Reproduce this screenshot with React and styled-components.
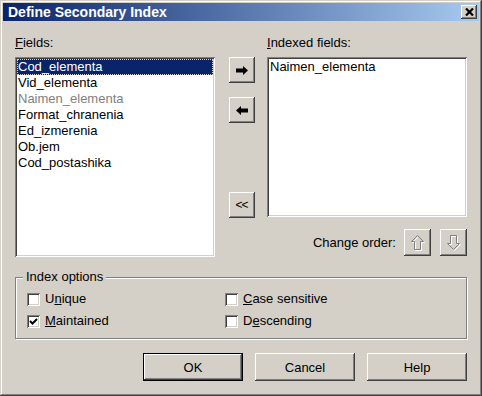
import React from "react";
import styled, { createGlobalStyle } from "styled-components";

const GlobalStyle = createGlobalStyle`
  html, body {
    margin: 0;
    padding: 0;
    background: #d4d0c8;
  }
  body {
    font-family: "Liberation Sans", Arial, sans-serif;
    font-size: 13px;
    color: #000;
  }
`;

const raised = `
  background: #d4d0c8;
  box-shadow: inset -1px -1px #404040, inset 1px 1px #fff,
    inset -2px -2px #808080, inset 2px 2px #d4d0c8;
`;

const sunken = `
  background: #fff;
  box-shadow: inset 1px 1px #808080, inset -1px -1px #fff,
    inset 2px 2px #404040, inset -2px -2px #d4d0c8;
`;

const fields = [
  { name: "Cod_elementa", selected: true },
  { name: "Vid_elementa" },
  { name: "Naimen_elementa", disabled: true },
  { name: "Format_chranenia" },
  { name: "Ed_izmerenia" },
  { name: "Ob.jem" },
  { name: "Cod_postashika" },
];

function App() {
  return (
    <>
      <GlobalStyle />
      <Window>
        <TitleBar>
          <Title>Define Secondary Index</Title>
          <CloseButton>
            <svg width="9" height="8" viewBox="0 0 9 8">
              <path d="M1 0.5 L8 7.5 M8 0.5 L1 7.5" stroke="#000" strokeWidth="2.2" />
            </svg>
          </CloseButton>
        </TitleBar>
        <Body>
          <Top>
            <Column>
              <Label>
                <Key>F</Key>ields:
              </Label>
              <ListBox $h={200}>
                {fields.map((f) => (
                  <Item key={f.name} $selected={f.selected} $disabled={f.disabled}>
                    {f.name}
                  </Item>
                ))}
              </ListBox>
            </Column>
            <ArrowColumn>
              <ToolButton>
                <svg width="12" height="9" viewBox="0 0 12 9">
                  <polygon points="0,2.5 7,2.5 7,0 12,4.5 7,9 7,6.5 0,6.5" fill="#000" />
                </svg>
              </ToolButton>
              <ToolButton>
                <svg width="12" height="9" viewBox="0 0 12 9">
                  <polygon points="12,2.5 5,2.5 5,0 0,4.5 5,9 5,6.5 12,6.5" fill="#000" />
                </svg>
              </ToolButton>
              <ToolButton $bottom>
                <Chevrons>&lt;&lt;</Chevrons>
              </ToolButton>
            </ArrowColumn>
            <Column>
              <Label>
                <Key>I</Key>ndexed fields:
              </Label>
              <ListBox $h={160}>
                <Item>Naimen_elementa</Item>
              </ListBox>
              <OrderRow>
                <OrderLabel>Change order:</OrderLabel>
                <OrderButton>
                  <svg width="14" height="16" viewBox="0 0 14 16">
                    <polygon points="7.5,1.5 1.5,7.5 4.5,7.5 4.5,15.5 10.5,15.5 10.5,7.5 13.5,7.5" fill="none" stroke="#fff" />
                    <polygon points="6.5,0.5 0.5,6.5 3.5,6.5 3.5,14.5 9.5,14.5 9.5,6.5 12.5,6.5" fill="none" stroke="#808080" />
                  </svg>
                </OrderButton>
                <OrderButton>
                  <svg width="14" height="16" viewBox="0 0 14 16">
                    <polygon points="7.5,15.5 1.5,9.5 4.5,9.5 4.5,1.5 10.5,1.5 10.5,9.5 13.5,9.5" fill="none" stroke="#fff" />
                    <polygon points="6.5,14.5 0.5,8.5 3.5,8.5 3.5,0.5 9.5,0.5 9.5,8.5 12.5,8.5" fill="none" stroke="#808080" />
                  </svg>
                </OrderButton>
              </OrderRow>
            </Column>
          </Top>
          <GroupBox>
            <Legend>Index options</Legend>
            <Options>
              <Option>
                <Check />
                <span>
                  U<Key>n</Key>ique
                </span>
              </Option>
              <Option>
                <Check />
                <span>
                  <Key>C</Key>ase sensitive
                </span>
              </Option>
              <Option>
                <Check>
                  <svg width="9" height="9" viewBox="0 0 9 9">
                    <polyline points="1,4 3.5,6.5 8,2" fill="none" stroke="#000" strokeWidth="2" />
                  </svg>
                </Check>
                <span>
                  <Key>M</Key>aintained
                </span>
              </Option>
              <Option>
                <Check />
                <span>
                  D<Key>e</Key>scending
                </span>
              </Option>
            </Options>
          </GroupBox>
          <Buttons>
            <PushButton $default>OK</PushButton>
            <PushButton>Cancel</PushButton>
            <PushButton>Help</PushButton>
          </Buttons>
        </Body>
      </Window>
    </>
  );
}

const Window = styled.div`
  width: 482px;
  height: 396px;
  box-sizing: border-box;
  padding: 3px;
  background: #d4d0c8;
  box-shadow: inset -1px -1px #404040, inset 1px 1px #d4d0c8,
    inset -2px -2px #808080, inset 2px 2px #fff;
  display: flex;
  flex-direction: column;
`;

const TitleBar = styled.div`
  height: 18px;
  flex-shrink: 0;
  display: flex;
  align-items: center;
  justify-content: space-between;
  padding: 0 2px 0 5px;
  background: linear-gradient(to right, #0a246a, #a6caf0);
`;

const Title = styled.span`
  color: #fff;
  font-weight: bold;
  font-size: 14px;
  line-height: 18px;
  white-space: nowrap;
`;

const CloseButton = styled.div`
  width: 16px;
  height: 14px;
  display: flex;
  align-items: center;
  justify-content: center;
  ${raised}
`;

const Body = styled.div`
  flex: 1;
  display: flex;
  flex-direction: column;
  padding: 14px 12px 12px;
`;

const Top = styled.div`
  display: flex;
  align-items: flex-start;
`;

const Column = styled.div`
  width: 200px;
  display: flex;
  flex-direction: column;
`;

const Label = styled.div`
  line-height: 16px;
  height: 16px;
  margin-bottom: 6px;
  white-space: nowrap;
`;

const Key = styled.span`
  text-decoration: underline;
`;

const ListBox = styled.div`
  height: ${(p) => p.$h}px;
  box-sizing: border-box;
  padding: 2px;
  overflow: hidden;
  ${sunken}
`;

const Item = styled.div`
  height: 16px;
  line-height: 16px;
  padding-left: 1px;
  white-space: nowrap;
  color: ${(p) => (p.$selected ? "#fff" : p.$disabled ? "#808080" : "#000")};
  background: ${(p) => (p.$selected ? "#0a246a" : "transparent")};
  outline: ${(p) => (p.$selected ? "1px dotted #d4d0c8" : "none")};
  outline-offset: -1px;
`;

const ArrowColumn = styled.div`
  width: 26px;
  height: 161px;
  margin: 22px 12px 0 14px;
  display: flex;
  flex-direction: column;
  gap: 14px;
`;

const ToolButton = styled.div`
  width: 26px;
  height: 26px;
  flex-shrink: 0;
  display: flex;
  align-items: center;
  justify-content: center;
  margin-top: ${(p) => (p.$bottom ? "auto" : "0")};
  ${raised}
`;

const Chevrons = styled.span`
  font-size: 12px;
  letter-spacing: -1px;
  line-height: 12px;
  margin-right: 1px;
`;

const OrderRow = styled.div`
  margin-top: 12px;
  display: flex;
  align-items: center;
  justify-content: flex-end;
  gap: 9px;
`;

const OrderLabel = styled.span`
  margin-right: -1px;
  white-space: nowrap;
`;

const OrderButton = styled.div`
  width: 27px;
  height: 27px;
  display: flex;
  align-items: center;
  justify-content: center;
  ${raised}
`;

const GroupBox = styled.div`
  margin-top: 20px;
  height: 62px;
  box-sizing: border-box;
  border: 1px solid #808080;
  box-shadow: inset 1px 1px #fff, 1px 1px #fff;
  display: flex;
  flex-direction: column;
`;

const Legend = styled.div`
  align-self: flex-start;
  margin: -9px 0 0 7px;
  padding: 0 3px;
  line-height: 16px;
  background: #d4d0c8;
`;

const Options = styled.div`
  margin-top: 6px;
  padding-left: 11px;
  display: grid;
  grid-template-columns: 198px 1fr;
  row-gap: 6px;
`;

const Option = styled.div`
  display: flex;
  align-items: center;
  gap: 5px;
  height: 16px;
  line-height: 16px;
`;

const Check = styled.div`
  width: 13px;
  height: 13px;
  box-sizing: border-box;
  display: flex;
  align-items: center;
  justify-content: center;
  ${sunken}
`;

const Buttons = styled.div`
  margin-top: 14px;
  display: flex;
  justify-content: flex-end;
  gap: 12px;
`;

const PushButton = styled.div`
  width: 100px;
  height: 28px;
  display: flex;
  align-items: center;
  justify-content: center;
  background: #d4d0c8;
  box-shadow: ${(p) =>
    p.$default
      ? "inset 0 0 0 1px #000, inset -2px -2px #404040, inset 2px 2px #fff, inset -3px -3px #808080, inset 3px 3px #d4d0c8"
      : "inset -1px -1px #404040, inset 1px 1px #fff, inset -2px -2px #808080, inset 2px 2px #d4d0c8"};
`;

export default App;
